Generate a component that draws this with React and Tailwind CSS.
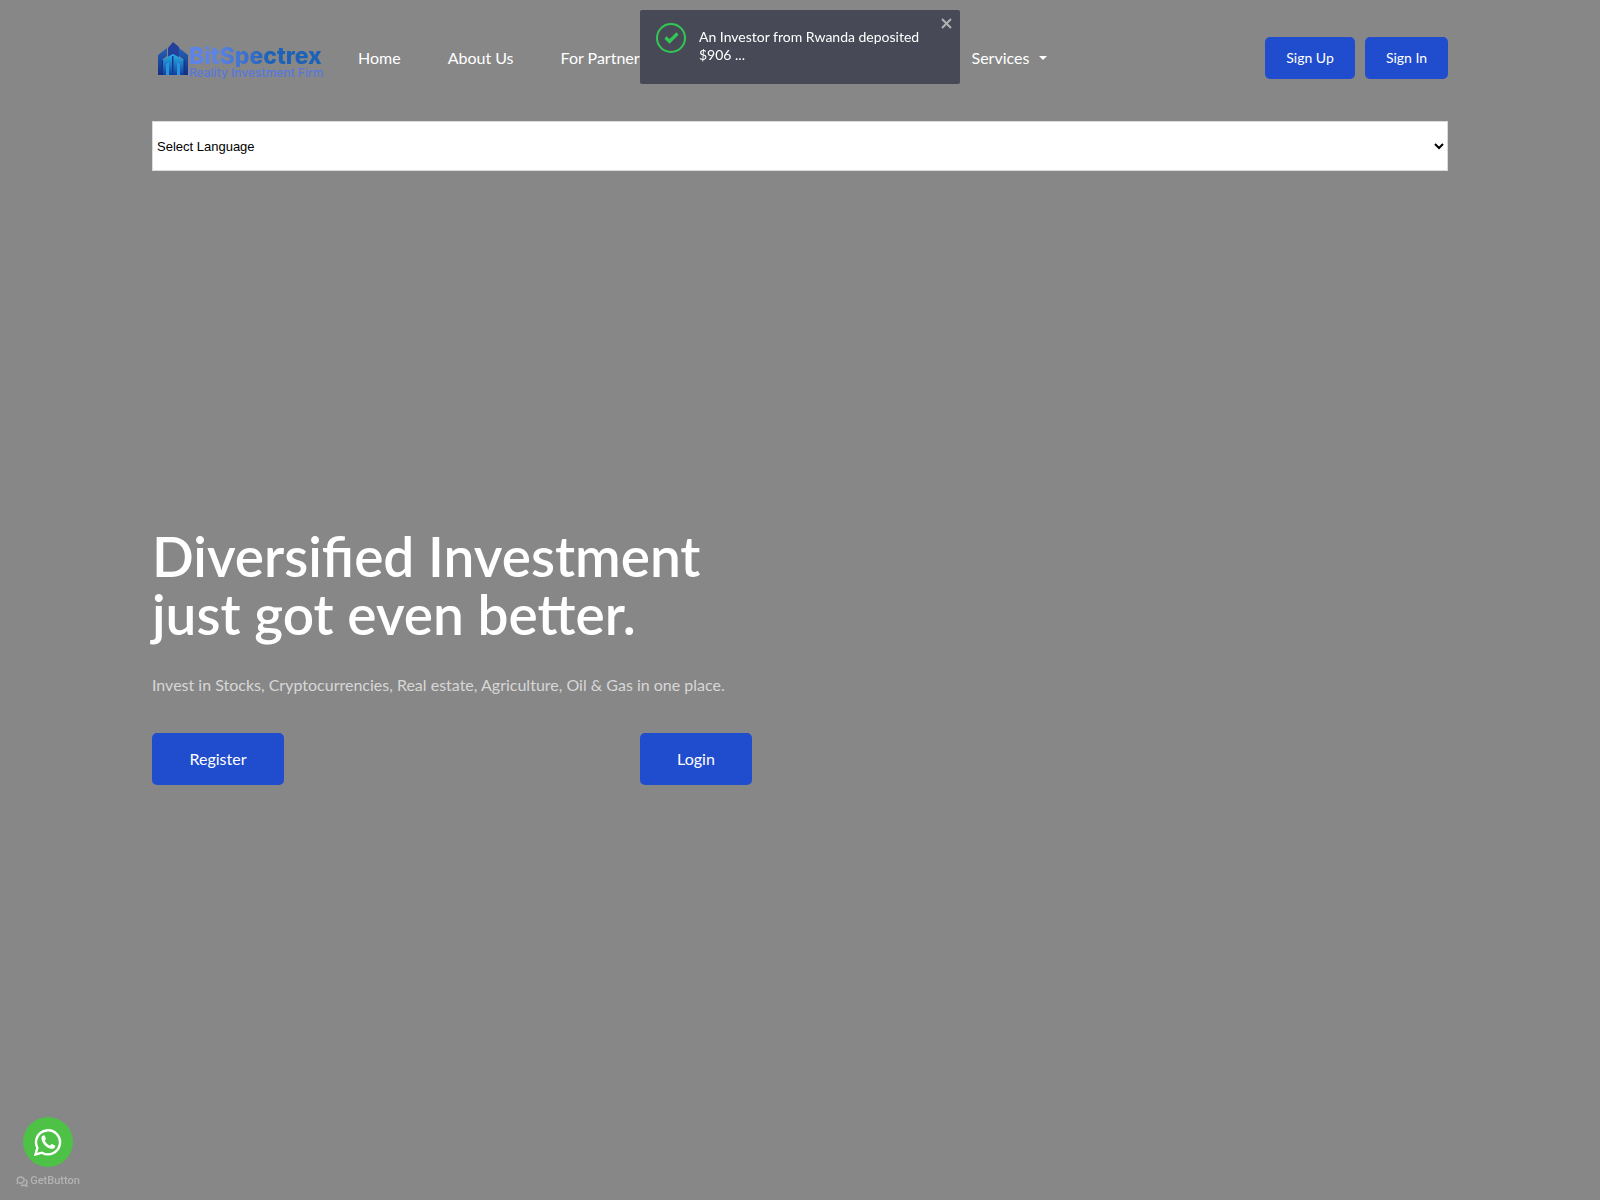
import { useState } from "react";

const links = [
  { label: "Home", href: "#home" },
  { label: "About Us", href: "#about" },
  { label: "For Partners", href: "#partners" },
];

function Logo() {
  return (
    <a href="#home" className="flex w-[206px] items-start pl-[6px] pt-[5px]">
      <svg width="30" height="34" viewBox="0 0 30 34" className="shrink-0">
        <defs>
          <linearGradient id="side" x1="0" y1="0" x2="0" y2="1">
            <stop offset="0" stopColor="#2563ba" />
            <stop offset="1" stopColor="#122f80" />
          </linearGradient>
          <linearGradient id="front" x1="0" y1="0" x2="0" y2="1">
            <stop offset="0" stopColor="#2bb0e8" />
            <stop offset="1" stopColor="#1040a0" />
          </linearGradient>
        </defs>
        <path d="M10 6 L15 0 L21 5 V17 H10 Z" fill="#22409c" />
        <path d="M0 13 L9 6 V14 L4 18 V33 H0 Z" fill="url(#side)" />
        <path d="M30 13 L21 6 V14 L26 18 V33 H30 Z" fill="url(#side)" />
        <path d="M4 18 L15 12 L26 18 V33 H4 Z" fill="url(#front)" />
        <path d="M8 33 V22 L11 20 V33 Z M19 33 V20 L22 22 V33 Z" fill="#2b93dc" />
        <path d="M14 14 H15.500 V33 H14 Z" fill="#143a94" />
        <path d="M4.500 18 V33 M26 18 V33" stroke="#14308a" />
      </svg>
      <span className="flex flex-col whitespace-nowrap pl-px pt-[3px] font-['Inter',sans-serif]">
        <span className="bg-linear-to-r from-[#5c84e8] from-20% to-[#1b62b8] to-60% bg-clip-text text-[23px] leading-[22px] font-extrabold text-transparent">BitSpectrex</span>
        <span className="text-[12px] leading-[12px] font-medium text-[#5878dc]">Reality Investment Firm</span>
      </span>
    </a>
  );
}

function Toast({ onClose }) {
  return (
    <div role="status" className="fixed top-[10px] left-1/2 z-50 flex min-h-[74px] w-80 -translate-x-1/2 items-start rounded-xs bg-[#474a56] pt-[13px] pl-4 text-white">
      <svg width="30" height="30" viewBox="0 0 30 30" fill="none" stroke="#31c854" className="shrink-0">
        <circle cx="15" cy="15" r="14" strokeWidth="2" />
        <path d="M9.500 14.500 L13.500 18.500 L21.500 10.500" strokeWidth="3.200" />
      </svg>
      <p className="pt-[5px] pr-7 pl-[13px] text-[14px] leading-[18px]">An Investor from Rwanda deposited $906 ...</p>
      <button onClick={onClose} aria-label="Close" className="absolute top-2 right-2">
        <svg width="11" height="11" viewBox="0 0 11 11" stroke="#b0b1b6" strokeWidth="2">
          <path d="M1 1 L10 10 M10 1 L1 10" />
        </svg>
      </button>
    </div>
  );
}

function Header() {
  return (
    <header className="flex items-start">
      <Logo />
      <nav className="flex flex-1 items-center text-[16px] leading-[42px] whitespace-nowrap">
        {links.map((l) => (
          <a key={l.label} href={l.href} className="mr-[47px]">{l.label}</a>
        ))}
        <button className="ml-[278px] flex items-center gap-[10px]">
          Services
          <span className="border-x-4 border-t-4 border-x-transparent border-t-white" />
        </button>
      </nav>
      <div className="flex gap-[10px] text-[14px] leading-[42px]">
        <a href="#signup" className="w-[90px] rounded-[5px] bg-[#204dcd] text-center">Sign Up</a>
        <a href="#signin" className="w-[83px] rounded-[5px] bg-[#204dcd] text-center">Sign In</a>
      </div>
    </header>
  );
}

function Hero() {
  return (
    <section className="max-w-[976px] pt-[356px]">
      <h1 className="max-w-[640px] text-[55px] leading-[58px] font-semibold">Diversified Investment<br />just got even better.</h1>
      <p className="pt-[30px] text-[16px] leading-6 text-[#d7d7d7]">Invest in Stocks, Cryptocurrencies, Real estate, Agriculture, Oil &amp; Gas in one place.</p>
      <div className="grid grid-cols-2 pt-9 text-[16px] leading-[52px]">
        <div>
          <a href="#register" className="inline-block w-[132px] rounded-[5px] bg-[#204dcd] text-center">Register</a>
        </div>
        <div>
          <a href="#login" className="inline-block w-28 rounded-[5px] bg-[#204dcd] text-center">Login</a>
        </div>
      </div>
    </section>
  );
}

function ChatWidget() {
  return (
    <div className="fixed bottom-3 left-4 flex w-16 flex-col items-center gap-[7px]">
      <a href="#whatsapp" aria-label="WhatsApp" className="flex size-[50px] items-center justify-center rounded-full bg-[#4dc247] text-white">
        <svg width="28" height="28" viewBox="0 0 28 28" fill="none">
          <path d="M1.500 26.500 L3.400 19.900 A12 12 0 1 1 8 24.700 Z" stroke="white" strokeWidth="2.400" />
          <path d="M9.700 7.300 C8.200 7.600 7.200 9 7.500 11 C8.200 15.500 13 20.500 17.500 20.800 C19.600 21 21.300 19.700 21.300 17.700 L18 15.900 C17 16 16.500 17.600 15.700 17.400 C13.500 16.600 11.700 14.800 10.900 13 C10.700 12.200 12.100 11.500 11.900 10.600 L10.600 7.600 Z" fill="white" />
        </svg>
      </a>
      <a href="#getbutton" className="flex items-center gap-[2px] font-['Roboto',sans-serif] text-[11px] leading-[14px] font-medium text-[#b3b3b3]">
        <svg width="12" height="11" viewBox="0 0 12 11" fill="none" stroke="currentColor" strokeWidth="1.400">
          <path d="M1 8 L2 6 A3.500 3 0 1 1 5 7 L3 7.500" />
          <path d="M9.500 3.500 A3 3 0 0 1 10.300 8 L11 10 L8.500 9.300 A4 3 0 0 1 5 9" />
        </svg>
        GetButton
      </a>
    </div>
  );
}

export default function App() {
  const [showToast, setShowToast] = useState(true);
  return (
    <div className="min-h-screen bg-[#878787] font-['Lato',sans-serif] text-white">
      <div className="mx-auto max-w-[1320px] px-3 pt-[37px]">
        <Header />
        <select aria-label="Select Language" className="mt-[42px] block h-[50px] w-full border border-[#dadada] bg-white font-['Liberation_Sans',sans-serif] text-[13px] text-black">
          <option>Select Language</option>
        </select>
        <Hero />
      </div>
      {showToast && <Toast onClose={() => setShowToast(false)} />}
      <ChatWidget />
    </div>
  );
}
